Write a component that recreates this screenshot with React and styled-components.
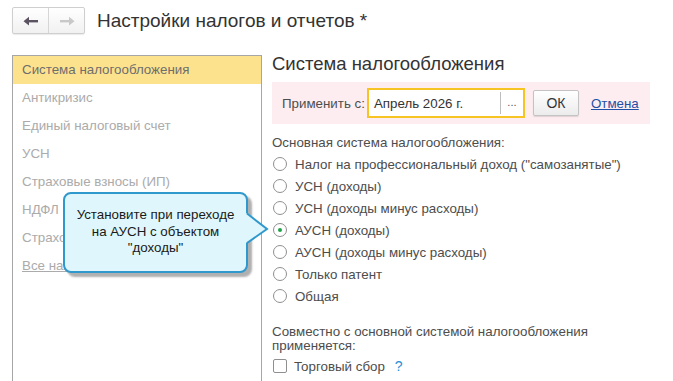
import React from 'react';
import styled, { createGlobalStyle } from 'styled-components';

const GlobalStyle = createGlobalStyle`
    html, body {
        margin: 0;
        padding: 0;
        background: #fff;
    }
    body {
        font-family: "Liberation Sans", Arial, sans-serif;
        font-size: 13.33px;
        color: #4d4d4d;
    }
`;

const menu = [
    'Система налогообложения',
    'Антикризис',
    'Единый налоговый счет',
    'УСН',
    'Страховые взносы (ИП)',
    'НДФЛ',
    'Страховые взносы (сотрудники)',
];

const systems = [
    'Налог на профессиональный доход ("самозанятые")',
    'УСН (доходы)',
    'УСН (доходы минус расходы)',
    'АУСН (доходы)',
    'АУСН (доходы минус расходы)',
    'Только патент',
    'Общая',
];

function App() {
    return (
        <>
            <GlobalStyle />
            <Page>
                <Header>
                    <NavGroup>
                        <NavBtn>
                            <Arrow dir="left" color="#5b5262" />
                        </NavBtn>
                        <NavBtn>
                            <Arrow dir="right" color="#c8c8c8" />
                        </NavBtn>
                    </NavGroup>
                    <Title>Настройки налогов и отчетов *</Title>
                </Header>
                <Main>
                    <Sidebar>
                        {menu.map((item, i) => (
                            <MenuItem key={item} active={i === 0}>{item}</MenuItem>
                        ))}
                        <MenuLink>Все налоги и отчеты</MenuLink>
                    </Sidebar>
                    <Content>
                        <SectionTitle>Система налогообложения</SectionTitle>
                        <ApplyBar>
                            <span>Применить с:</span>
                            <DateField>
                                <DateValue>Апрель 2026 г.</DateValue>
                                <DateMore>...</DateMore>
                            </DateField>
                            <OkButton>ОК</OkButton>
                            <CancelLink>Отмена</CancelLink>
                        </ApplyBar>
                        <GroupLabel>Основная система налогообложения:</GroupLabel>
                        <RadioList>
                            {systems.map((s, i) => (
                                <RadioRow key={s}>
                                    <RadioCircle checked={i === 3} />
                                    <span>{s}</span>
                                </RadioRow>
                            ))}
                        </RadioList>
                        <ExtraLabel>
                            <div>Совместно с основной системой налогообложения</div>
                            <div>применяется:</div>
                        </ExtraLabel>
                        <CheckRow>
                            <CheckBox />
                            <span>Торговый сбор</span>
                            <Help>?</Help>
                        </CheckRow>
                    </Content>
                </Main>
                <Callout>
                    <CalloutLine>Установите при переходе</CalloutLine>
                    <CalloutLine>на АУСН с объектом</CalloutLine>
                    <CalloutLine>"доходы"</CalloutLine>
                    <CalloutTail width="24" height="34" viewBox="0 0 24 34">
                        <polygon points="0,0 21,16 0,30" fill="#dff7fc" />
                        <polyline points="1,0.5 21,16 1,30" fill="none" stroke="#2f98cc" strokeWidth="2" strokeLinejoin="miter" />
                    </CalloutTail>
                </Callout>
            </Page>
        </>
    );
}

function Arrow({ dir, color }) {
    const flip = dir === 'right' ? 'scale(-1,1) translate(-16,0)' : undefined;
    return (
        <svg width="16" height="10" viewBox="0 0 16 10">
            <g transform={flip}>
                <rect x="5" y="4" width="10" height="2.4" fill={color} />
                <polygon points="0.5,5.2 6,0.8 6,9.6" fill={color} />
            </g>
        </svg>
    );
}

const Page = styled.div`
    position: relative;
    width: 673px;
    height: 381px;
    overflow: hidden;
`;

const Header = styled.div`
    display: flex;
    align-items: center;
    gap: 12px;
    height: 41px;
    padding: 0 12px;
`;

const NavGroup = styled.div`
    display: flex;
    height: 25px;
    border: 1px solid #cfcfcf;
    border-radius: 2px;
    box-shadow: 0 1px 1px rgba(0, 0, 0, 0.08);
    background: linear-gradient(#ffffff, #f1f1f1);
`;

const NavBtn = styled.div`
    display: flex;
    align-items: center;
    justify-content: center;
    width: 35px;

    & + & {
        border-left: 1px solid #d6d6d6;
    }
`;

const Title = styled.h1`
    margin: 0;
    font-size: 19px;
    font-weight: normal;
    color: #333;
`;

const Main = styled.div`
    display: flex;
    gap: 10px;
    padding: 14px 0 0 12px;
`;

const Sidebar = styled.div`
    width: 248px;
    height: 340px;
    border: 1px solid #a6a6a6;
    border-bottom: none;
    flex-shrink: 0;
`;

const MenuItem = styled.div`
    height: 28px;
    line-height: 28px;
    padding-left: 9px;
    color: ${props => (props.active ? '#6e6e6e' : '#ababab')};
    background: ${props => (props.active ? '#fde28d' : 'transparent')};
    white-space: nowrap;
    overflow: hidden;
`;

const MenuLink = styled(MenuItem)`
    text-decoration: underline;
`;

const Content = styled.div`
    display: flex;
    flex-direction: column;
    width: 378px;
`;

const SectionTitle = styled.h2`
    margin: 0;
    height: 27px;
    line-height: 18px;
    font-size: 18.5px;
    font-weight: normal;
    color: #333;
`;

const ApplyBar = styled.div`
    display: flex;
    align-items: center;
    height: 42px;
    padding: 0 10px;
    background: #fdedf1;
    color: #4d4d4d;
`;

const DateField = styled.div`
    display: flex;
    align-items: center;
    margin-left: 2px;
    width: 154px;
    height: 26px;
    border: 2px solid #f7c523;
    background: #fff;
`;

const DateValue = styled.span`
    flex: 1;
    padding-left: 5px;
    color: #333;
`;

const DateMore = styled.span`
    width: 22px;
    height: 22px;
    line-height: 20px;
    text-align: center;
    border-left: 1px solid #bdbdbd;
    font-size: 11px;
    color: #555;
`;

const OkButton = styled.div`
    display: flex;
    align-items: center;
    justify-content: center;
    margin-left: 8px;
    width: 44px;
    height: 24px;
    border: 1px solid #c3c3c3;
    border-radius: 2px;
    background: linear-gradient(#ffffff, #ececec);
    box-shadow: 0 1px 1px rgba(0, 0, 0, 0.12);
    font-size: 14px;
    color: #333;
`;

const CancelLink = styled.span`
    margin-left: 12px;
    color: #1d50a6;
    text-decoration: underline;
`;

const GroupLabel = styled.div`
    margin-top: 11px;
    height: 16px;
    line-height: 16px;
`;

const RadioList = styled.div`
    display: flex;
    flex-direction: column;
    margin-top: 2px;
`;

const RadioRow = styled.div`
    display: flex;
    align-items: center;
    gap: 8px;
    height: 22px;
    padding-left: 1px;
`;

const RadioCircle = styled.span`
    position: relative;
    box-sizing: border-box;
    width: 14px;
    height: 14px;
    border: 1px solid #8f8f8f;
    border-radius: 50%;
    background: #fff;

    &::after {
        content: '';
        display: ${props => (props.checked ? 'block' : 'none')};
        position: absolute;
        top: 4px;
        left: 4px;
        width: 4px;
        height: 4px;
        border-radius: 50%;
        background: #1fa24a;
    }
`;

const ExtraLabel = styled.div`
    margin-top: 18px;
    line-height: 14px;
`;

const CheckRow = styled.div`
    display: flex;
    align-items: center;
    gap: 7px;
    margin-top: 4px;
    height: 18px;
    padding-left: 1px;
`;

const CheckBox = styled.span`
    box-sizing: border-box;
    width: 14px;
    height: 14px;
    border: 1px solid #8f8f8f;
    border-radius: 2px;
    background: #fff;
`;

const Help = styled.span`
    margin-left: 3px;
    color: #2b8fd6;
    font-size: 14px;
`;

const Callout = styled.div`
    position: absolute;
    left: 63px;
    top: 192px;
    box-sizing: border-box;
    width: 185px;
    height: 81px;
    padding-top: 13px;
    border: 2px solid #2f98cc;
    border-radius: 8px;
    background: #dff7fc;
    box-shadow: 4px 4px 2px rgba(80, 80, 80, 0.45);
    text-align: center;
    color: #1a1a1a;
`;

const CalloutLine = styled.div`
    height: 16.5px;
    line-height: 16.5px;
`;

const CalloutTail = styled.svg`
    position: absolute;
    left: 181px;
    top: 19px;
    overflow: visible;
`;

export default App;
